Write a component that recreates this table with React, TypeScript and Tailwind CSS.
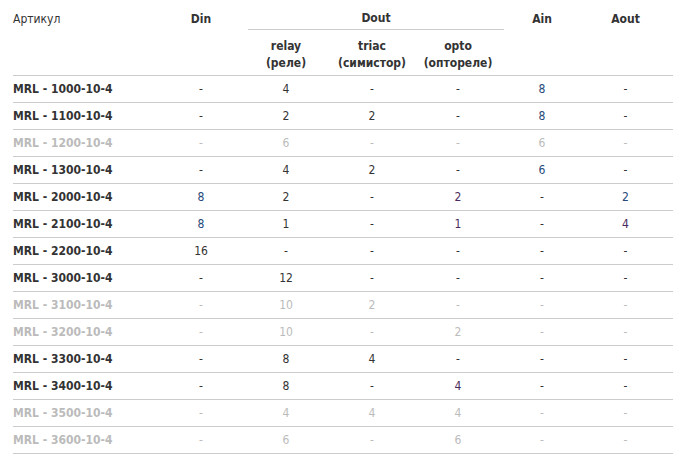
const rows: { name: string; off?: boolean; cells: string[] }[] = [
  { name: 'MRL - 1000-10-4', cells: ['-', '4', '-', '-', '8', '-'] },
  { name: 'MRL - 1100-10-4', cells: ['-', '2', '2', '-', '8', '-'] },
  { name: 'MRL - 1200-10-4', off: true, cells: ['-', '6', '-', '-', '6', '-'] },
  { name: 'MRL - 1300-10-4', cells: ['-', '4', '2', '-', '6', '-'] },
  { name: 'MRL - 2000-10-4', cells: ['8', '2', '-', '2', '-', '2'] },
  { name: 'MRL - 2100-10-4', cells: ['8', '1', '-', '1', '-', '4'] },
  { name: 'MRL - 2200-10-4', cells: ['16', '-', '-', '-', '-', '-'] },
  { name: 'MRL - 3000-10-4', cells: ['-', '12', '-', '-', '-', '-'] },
  { name: 'MRL - 3100-10-4', off: true, cells: ['-', '10', '2', '-', '-', '-'] },
  { name: 'MRL - 3200-10-4', off: true, cells: ['-', '10', '-', '2', '-', '-'] },
  { name: 'MRL - 3300-10-4', cells: ['-', '8', '4', '-', '-', '-'] },
  { name: 'MRL - 3400-10-4', cells: ['-', '8', '-', '4', '-', '-'] },
  { name: 'MRL - 3500-10-4', off: true, cells: ['-', '4', '4', '4', '-', '-'] },
  { name: 'MRL - 3600-10-4', off: true, cells: ['-', '6', '-', '6', '-', '-'] }
]

// column tint for the active rows (din, relay, triac, opto, ain, aout)
const tint = (col: number, value: string): string => {
  if (value === '-') return 'text-[#333]'
  if (col === 0 && value === '8') return 'text-[#27497a]'
  if (col === 4) return 'text-[#27497a]'
  if (col === 3) return 'text-[#4b2b5c]'
  if (col === 5) return value === '4' ? 'text-[#4b2b5c]' : 'text-[#27497a]'
  return 'text-[#333]'
}

function App (): JSX.Element {
  return (
    <div className="min-h-[466px] bg-white pl-[13px] pr-[10px] text-[12px] text-[#333]" style={{ fontFamily: '"DejaVu Sans Condensed", "DejaVu Sans", Verdana, sans-serif' }}>
      <table className="w-[660px] table-fixed border-collapse">
        <colgroup>
          <col className="w-[145px]" />
          <col className="w-[86px]" />
          <col className="w-[84px]" />
          <col className="w-[88px]" />
          <col className="w-[84px]" />
          <col className="w-[84px]" />
          <col className="w-[89px]" />
        </colgroup>
        <thead>
          <tr className="h-[30px]">
            <th rowSpan={2} className="border-b border-[#ccc] pt-[10px] text-left align-top font-normal">Артикул</th>
            <th rowSpan={2} className="border-b border-[#ccc] pt-[10px] align-top font-bold">Din</th>
            <th colSpan={3} className="p-0 align-top font-bold">
              <div className="ml-[4px] mr-[-4px] h-[30px] border-b border-[#ccc] pt-[9px]">Dout</div>
            </th>
            <th rowSpan={2} className="border-b border-[#ccc] pt-[10px] align-top font-bold">Ain</th>
            <th rowSpan={2} className="border-b border-[#ccc] pr-[6px] pt-[10px] align-top font-bold">Aout</th>
          </tr>
          <tr className="h-[45px]">
            <th className="border-b border-[#ccc] pt-[8px] align-top font-bold leading-[17px]">relay<br />(реле)</th>
            <th className="border-b border-[#ccc] pt-[8px] align-top font-bold leading-[17px]">triac<br />(симистор)</th>
            <th className="border-b border-[#ccc] pt-[8px] align-top font-bold leading-[17px]">opto<br />(оптореле)</th>
          </tr>
        </thead>
        <tbody>
          {rows.map((row) => (
            <tr key={row.name} className={`h-[27px] ${row.off === true ? 'text-[#bbb]' : ''}`}>
              <td className="border-b border-[#ccc] p-0 font-bold">{row.name}</td>
              {row.cells.map((value, i) => (
                <td key={i} className={`border-b border-[#ccc] p-0 text-center ${i === 5 ? 'pr-[6px]' : ''} ${row.off === true ? '' : tint(i, value)}`}>
                  {value}
                </td>
              ))}
            </tr>
          ))}
        </tbody>
      </table>
    </div>
  )
}

export default App
